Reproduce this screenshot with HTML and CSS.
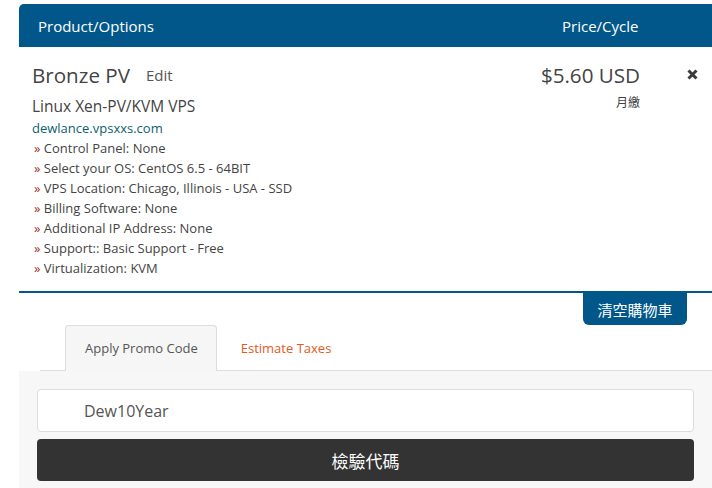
FILE: index.html
```html
<!DOCTYPE html>
<html>
<head>
<meta charset="utf-8">
<link rel="stylesheet" href="styles.css">
</head>
<body>
<div class="cart">
  <div class="cart-head">
    <div class="col-product">Product/Options</div>
    <div class="col-price">Price/Cycle</div>
  </div>
  <div class="item">
    <div class="item-info">
      <div class="item-title"><span class="name">Bronze PV</span><a class="edit">Edit</a></div>
      <div class="item-group">Linux Xen-PV/KVM VPS</div>
      <div class="item-domain">dewlance.vpsxxs.com</div>
      <ul class="options">
        <li><span class="raquo">»</span> Control Panel: None</li>
        <li><span class="raquo">»</span> Select your OS: CentOS 6.5 - 64BIT</li>
        <li><span class="raquo">»</span> VPS Location: Chicago, Illinois - USA - SSD</li>
        <li><span class="raquo">»</span> Billing Software: None</li>
        <li><span class="raquo">»</span> Additional IP Address: None</li>
        <li><span class="raquo">»</span> Support:: Basic Support - Free</li>
        <li><span class="raquo">»</span> Virtualization: KVM</li>
      </ul>
    </div>
    <div class="item-price">
      <div class="amount">$5.60 USD</div>
      <div class="cycle">月繳</div>
    </div>
    <div class="item-remove">
      <svg width="11" height="11" viewBox="0 0 11 11"><path d="M1.5 1.5 L9.5 9.5 M9.5 1.5 L1.5 9.5" stroke="#3a3a3a" stroke-width="3" stroke-linecap="butt"/></svg>
    </div>
  </div>
  <div class="empty-row">
    <button class="btn-empty">清空購物車</button>
  </div>
  <ul class="tabs">
    <li class="tab active">Apply Promo Code</li>
    <li class="tab">Estimate Taxes</li>
  </ul>
  <div class="tab-panel">
    <input class="promo-input" type="text" value="Dew10Year">
    <button class="btn-validate">檢驗代碼</button>
  </div>
</div>
</body>
</html>
```

FILE: styles.css
```css
html, body {
  margin: 0;
  padding: 0;
  background: #fff;
  overflow: hidden;
}
body {
  font-family: "Open Sans", "Noto Sans CJK TC", sans-serif;
  color: #444;
  width: 712px;
  height: 488px;
}
.cart {
  margin-left: 19px;
  padding-top: 4px;
}
.cart-head {
  display: flex;
  height: 43px;
  align-items: center;
  background: #01578a;
  color: #fff;
  font-size: 15px;
  border-top-left-radius: 5px;
}
.col-product {
  flex: 1;
  padding-left: 19px;
}
.col-price {
  width: 150px;
}
.item {
  display: flex;
  padding: 14px 0 13px 13px;
  border-bottom: 2px solid #01578a;
}
.item-info {
  flex: 1;
}
.item-title {
  height: 28px;
  line-height: 28px;
}
.name {
  font-size: 20.6px;
  color: #444;
}
.edit {
  font-size: 15px;
  color: #555;
  margin-left: 16px;
  vertical-align: 2px;
}
.item-group {
  margin-top: 6px;
  font-size: 15.5px;
  line-height: 23px;
  color: #444;
}
.item-domain {
  font-size: 13px;
  line-height: 20px;
  color: #0b5f70;
}
.options {
  list-style: none;
  margin: 0;
  padding: 0 0 0 2px;
  font-size: 13px;
  line-height: 20px;
  color: #444;
}
.raquo {
  color: #a0301e;
}
.item-price {
  text-align: right;
}
.amount {
  font-size: 20.6px;
  line-height: 28px;
  color: #444;
}
.cycle {
  margin-top: 3px;
  font-size: 12px;
  line-height: 22px;
  color: #444;
}
.item-remove {
  width: 72px;
  display: flex;
  justify-content: flex-end;
  padding-right: 14px;
  box-sizing: border-box;
  padding-top: 8px;
}
.item-remove svg {
  display: block;
}
.empty-row {
  display: flex;
  justify-content: flex-end;
  padding-right: 25px;
}
.btn-empty {
  width: 104px;
  height: 32px;
  border: 0;
  margin: 0;
  background: #01578a;
  color: #fff;
  font-family: "Open Sans", "Noto Sans CJK TC", sans-serif;
  font-size: 15px;
  border-radius: 0 0 6px 6px;
  padding: 0;
}
.tabs {
  list-style: none;
  margin: 0 0 0 21px;
  padding: 0 0 0 25px;
  display: flex;
  border-bottom: 1px solid #ddd;
  height: 45px;
}
.tab {
  padding: 0 20px;
  margin-right: 3px;
  font-size: 13px;
  line-height: 45px;
  color: #e25a1c;
  border: 1px solid transparent;
  border-bottom: 0;
}
.tab.active {
  background: #f6f6f6;
  color: #555;
  border-color: #ddd;
  border-radius: 4px 4px 0 0;
  line-height: 44px;
  margin-bottom: -1px;
  height: 45px;
  padding-left: 19px;
  padding-right: 18px;
}
.tab-panel {
  background: #f7f7f7;
  padding: 18px 18px 10px 18px;
  display: flex;
  flex-direction: column;
  gap: 7px;
  height: 120px;
  box-sizing: border-box;
}
.promo-input {
  height: 44px;
  box-sizing: border-box;
  border: 1px solid #ddd;
  border-radius: 4px;
  background: #fff;
  padding: 0 0 0 46px;
  font-family: "Open Sans", sans-serif;
  font-size: 16px;
  color: #555;
  margin: 0;
  outline: none;
}
.btn-validate {
  height: 43px;
  border: 0;
  border-radius: 4px;
  background: #333;
  color: #fff;
  font-family: "Open Sans", "Noto Sans CJK TC", sans-serif;
  font-size: 17px;
  margin: 0;
  padding: 0;
}
```
